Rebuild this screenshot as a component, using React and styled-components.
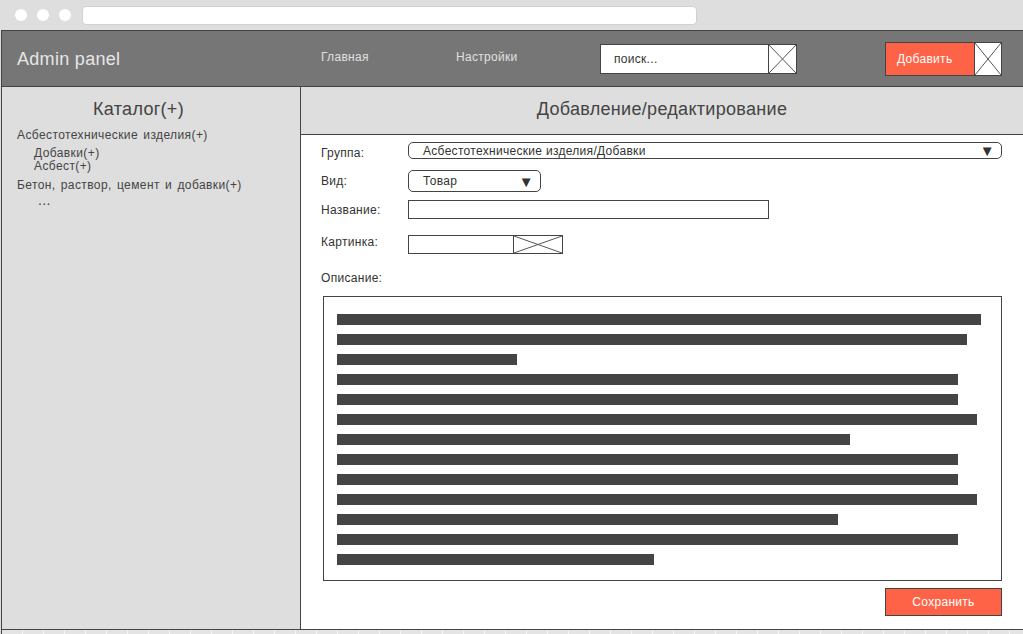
import React from "react";
import styled, { createGlobalStyle } from "styled-components";

const GlobalStyle = createGlobalStyle`
  html, body {
    margin: 0;
    padding: 0;
    background: #dedede;
  }
  body {
    font-family: "Liberation Sans", Arial, sans-serif;
    color: #333;
    letter-spacing: 0.3px;
  }
  * {
    box-sizing: border-box;
  }
`;

const Window = styled.div`
  width: 1023px;
  height: 634px;
  display: flex;
  flex-direction: column;
  background: #dedede;
  overflow: hidden;
`;

const Chrome = styled.div`
  height: 30px;
  display: flex;
  align-items: center;
  padding-left: 15px;
  gap: 10px;
`;

const Dot = styled.span`
  width: 12px;
  height: 12px;
  border-radius: 50%;
  background: #fff;
`;

const AddressBar = styled.div`
  margin-left: 1px;
  width: 615px;
  height: 19px;
  background: #fff;
  border: 1px solid #d0d0d0;
  border-radius: 4px;
`;

const Frame = styled.div`
  flex: 1;
  margin-left: 1px;
  display: flex;
  flex-direction: column;
  border-left: 1px solid #444;
`;

const Header = styled.header`
  height: 57px;
  display: flex;
  align-items: center;
  background: #767676;
  border-top: 1px solid #444;
  border-bottom: 1px solid #444;
  padding-left: 15px;
`;

const Brand = styled.div`
  width: 304px;
  font-size: 18px;
  color: #e6e6e6;
  padding-top: 2px;
`;

const NavLink = styled.a`
  width: ${(p) => p.$w}px;
  font-size: 12px;
  color: #e0e0e0;
  margin-top: -3px;
  cursor: pointer;
`;

const SearchBox = styled.div`
  display: flex;
  height: 30px;
  border: 1px solid #444;
  background: #fff;
`;

const SearchInput = styled.div`
  width: 167px;
  display: flex;
  align-items: center;
  padding-left: 13px;
  font-size: 12px;
  color: #333;
`;

const CrossBox = styled.div`
  width: ${(p) => p.$w}px;
  height: 100%;
  background: #fff;
  border-left: 1px solid #444;
  display: flex;

  svg {
    width: 100%;
    height: 100%;
    display: block;
  }
`;

const AddGroup = styled.div`
  margin-left: 88px;
  display: flex;
  height: 34px;
  border: 1px solid #444;
`;

const AddButton = styled.button`
  width: 88px;
  border: none;
  background: #ff6347;
  color: #fff;
  font-family: inherit;
  letter-spacing: inherit;
  font-size: 12px;
  text-align: left;
  padding: 0 0 0 11px;
`;

const Body = styled.div`
  flex: 1;
  display: flex;
  min-height: 0;
  border-bottom: 1px solid #444;
`;

const Sidebar = styled.aside`
  width: 299px;
  background: #dedede;
  border-right: 1px solid #444;
  padding: 12px 0 0 15px;
`;

const SidebarTitle = styled.div`
  font-size: 18px;
  text-align: center;
  color: #444;
  padding-right: 40px;
  margin-bottom: 8px;
`;

const TreeItem = styled.div`
  font-size: 12px;
  line-height: ${(p) => (p.$tight ? 13 : 14)}px;
  color: #444;
  letter-spacing: 0.4px;
  word-spacing: 1.5px;
  padding-left: ${(p) => p.$indent}px;
  margin-top: ${(p) => p.$mt || 0}px;
`;

const Ellipsis = styled.div`
  padding-left: 21px;
  font-size: 14px;
  line-height: 14px;
  margin-top: 1px;
  color: #444;
`;

const Content = styled.main`
  flex: 1;
  background: #fff;
  display: flex;
  flex-direction: column;
`;

const ContentHeader = styled.div`
  height: 48px;
  background: #dedede;
  border-bottom: 1px solid #444;
  display: flex;
  align-items: center;
  justify-content: center;
  font-size: 18px;
  color: #444;
  padding-bottom: 3px;
`;

const Form = styled.div`
  padding: 7px 21px 0 20px;
  display: flex;
  flex-direction: column;
`;

const Row = styled.div`
  display: grid;
  grid-template-columns: 87px 1fr;
  align-items: start;
  margin-top: ${(p) => p.$mt || 0}px;
`;

const Label = styled.div`
  font-size: 12px;
  line-height: 14px;
  color: #333;
  padding-top: ${(p) => p.$pt || 0}px;
`;

const Select = styled.div`
  width: ${(p) => (p.$w ? `${p.$w}px` : "100%")};
  height: ${(p) => p.$h}px;
  border: 1px solid #444;
  border-radius: ${(p) => p.$r}px;
  display: flex;
  align-items: center;
  justify-content: space-between;
  padding: 0 6px 0 14px;
  font-size: 12px;
  color: #333;
`;

const Arrow = styled.span`
  font-size: 15px;
  color: #333;
  line-height: 1;
`;

const TextInput = styled.div`
  width: ${(p) => p.$w}px;
  height: 19px;
  border: 1px solid #444;
  background: #fff;
`;

const FileField = styled.div`
  display: flex;
  width: 155px;
  height: 19px;
  border: 1px solid #444;
`;

const FileName = styled.div`
  width: 104px;
`;

const Description = styled.div`
  margin: 11px 0 0 2px;
  height: 285px;
  border: 1px solid #444;
  padding: 17px 0 0 13px;
  display: flex;
  flex-direction: column;
  gap: 9px;
`;

const TextBar = styled.div`
  height: 11px;
  background: #444;
`;

const Footer = styled.div`
  display: flex;
  justify-content: flex-end;
  margin-top: 7px;
`;

const SaveButton = styled.button`
  width: 117px;
  height: 28px;
  background: #ff6347;
  border: 1px solid #444;
  color: #fff;
  font-family: inherit;
  letter-spacing: inherit;
  font-size: 12px;
`;

const Ruler = styled.div`
  height: 4px;
  background-color: #e4e4e4;
  background-image: repeating-linear-gradient(
    to right,
    transparent 0,
    transparent 20px,
    #f6f6f6 20px,
    #f6f6f6 21px
  );
`;

const Cross = () => (
  <svg viewBox="0 0 100 100" preserveAspectRatio="none">
    <line x1="0" y1="0" x2="100" y2="100" stroke="#555" strokeWidth="1" vectorEffect="non-scaling-stroke" />
    <line x1="100" y1="0" x2="0" y2="100" stroke="#555" strokeWidth="1" vectorEffect="non-scaling-stroke" />
  </svg>
);

// ширины строк-заглушек в поле описания
const bars = [644, 630, 180, 621, 621, 640, 513, 621, 621, 640, 501, 621, 317];

export default function App() {
  return (
    <>
      <GlobalStyle />
      <Window>
        <Chrome>
          <Dot />
          <Dot />
          <Dot />
          <AddressBar />
        </Chrome>
        <Frame>
          <Header>
            <Brand>Admin panel</Brand>
            <NavLink $w={135}>Главная</NavLink>
            <NavLink $w={144}>Настройки</NavLink>
            <SearchBox>
              <SearchInput>поиск...</SearchInput>
              <CrossBox $w={28}>
                <Cross />
              </CrossBox>
            </SearchBox>
            <AddGroup>
              <AddButton>Добавить</AddButton>
              <CrossBox $w={27}>
                <Cross />
              </CrossBox>
            </AddGroup>
          </Header>
          <Body>
            <Sidebar>
              <SidebarTitle>Каталог(+)</SidebarTitle>
              <TreeItem $indent={0}>Асбестотехнические изделия(+)</TreeItem>
              <TreeItem $indent={17} $tight $mt={5}>Добавки(+)</TreeItem>
              <TreeItem $indent={17} $tight>Асбест(+)</TreeItem>
              <TreeItem $indent={0} $mt={5}>Бетон, раствор, цемент и добавки(+)</TreeItem>
              <Ellipsis>...</Ellipsis>
            </Sidebar>
            <Content>
              <ContentHeader>Добавление/редактирование</ContentHeader>
              <Form>
                <Row>
                  <Label $pt={4}>Группа:</Label>
                  <Select $h={17} $r={5}>
                    Асбестотехнические изделия/Добавки
                    <Arrow>▼</Arrow>
                  </Select>
                </Row>
                <Row $mt={10}>
                  <Label $pt={4}>Вид:</Label>
                  <Select $w={133} $h={22} $r={5}>
                    Товар
                    <Arrow>▼</Arrow>
                  </Select>
                </Row>
                <Row $mt={8}>
                  <Label $pt={3}>Название:</Label>
                  <TextInput $w={361} />
                </Row>
                <Row $mt={16}>
                  <Label $pt={0}>Картинка:</Label>
                  <FileField>
                    <FileName />
                    <CrossBox $w={49}>
                      <Cross />
                    </CrossBox>
                  </FileField>
                </Row>
                <Row $mt={17}>
                  <Label>Описание:</Label>
                </Row>
                <Description>
                  {bars.map((w, i) => (
                    <TextBar key={i} style={{ width: w }} />
                  ))}
                </Description>
                <Footer>
                  <SaveButton>Сохранить</SaveButton>
                </Footer>
              </Form>
            </Content>
          </Body>
          <Ruler />
        </Frame>
      </Window>
    </>
  );
}
